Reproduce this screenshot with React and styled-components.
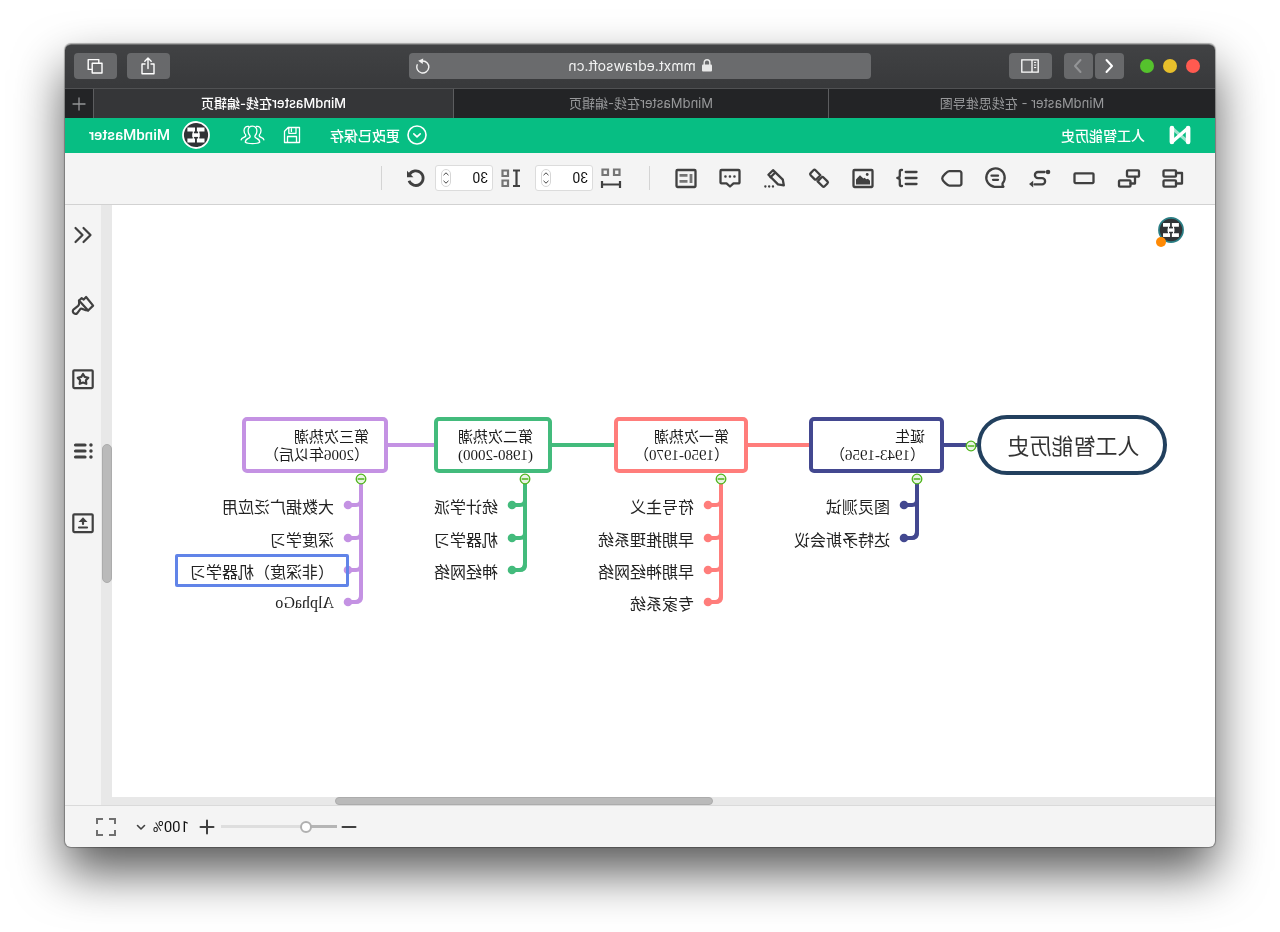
import React from 'react';
import styled, { createGlobalStyle } from 'styled-components';

const GlobalStyle = createGlobalStyle`
	* {
		box-sizing: border-box;
	}

	body {
		margin: 0;
		background: #fff;
	}

	button, input, select {
		font-family: inherit;
		margin: 0;
	}
`;

// the page is shown as seen in a mirror
const Page = styled.div`
	min-height: 100vh;
	padding: 44px 65px 85px;
	display: flex;
	overflow: hidden;
	transform: scaleX(-1);
	font-family: Inter, "Noto Sans CJK SC", sans-serif;
`;

const Window = styled.div`
	flex: 1;
	min-width: 0;
	display: flex;
	flex-direction: column;
	border-radius: 6px;
	background: #f4f4f4;
	box-shadow: 0 0 1px 1px rgba(0, 0, 0, 0.3), 0 25px 50px rgba(0, 0, 0, 0.66);
`;

const TitleBar = styled.div`
	height: 44px;
	padding: 0 9px 2px;
	display: grid;
	grid-template-columns: 1fr 462px 1fr;
	column-gap: 6px;
	align-items: center;
	border-radius: 6px 6px 0 0;
	border-top: 1px solid #6c6d6e;
	background: linear-gradient(#414244, #38393b);
`;

const BarGroup = styled.div`
	display: flex;
	align-items: center;
	gap: ${({ $gap }) => $gap}px;
	padding-left: ${({ $before }) => $before || 0}px;
	justify-content: ${({ $end }) => ($end ? 'flex-end' : 'flex-start')};
`;

const Light = styled.button`
	width: 14px;
	height: 14px;
	padding: 0;
	border: 0;
	border-radius: 50%;
	background: ${({ $color }) => $color};
`;

const ChromeButton = styled.button`
	width: ${({ $narrow }) => ($narrow ? 29 : 43)}px;
	height: 26px;
	padding: 0;
	border: 0;
	border-radius: 4px;
	background: #68696b;
	color: ${({ $dim }) => ($dim ? '#949597' : '#fff')};
	display: flex;
	align-items: center;
	justify-content: center;
`;

const AddressBar = styled.div`
	height: 26px;
	padding: 0 2px 0 26px;
	border-radius: 4px;
	background: #6a6b6d;
	color: #f2f2f2;
	display: flex;
	align-items: center;
	font-size: 14px;
`;

const Address = styled.div`
	flex: 1;
	display: flex;
	align-items: center;
	justify-content: center;
	gap: 6px;
`;

const Tabs = styled.div`
	height: 30px;
	display: flex;
	border-top: 1px solid #505153;
	background: #232426;
`;

const Tab = styled.button`
	flex: ${({ $share }) => $share} 1 0;
	padding: 0 0 2px;
	border: 0;
	border-right: 1px solid #5c5d5f;
	background: ${({ $active }) => ($active ? '#353638' : 'transparent')};
	color: ${({ $active }) => ($active ? '#fff' : '#97989a')};
	font-size: 13px;
	font-weight: ${({ $active }) => ($active ? 500 : 400)};
`;

const NewTab = styled.button`
	width: 28px;
	padding: 0;
	border: 0;
	background: transparent;
	color: #949597;
	display: flex;
	align-items: center;
	justify-content: center;
`;

const AppBar = styled.header`
	height: 35px;
	padding: 0 24px 2px;
	background: #07be83;
	color: #fff;
	display: flex;
	align-items: center;
	font-size: 14px;
`;

const DocTitle = styled.h1`
	margin: 0 auto 0 24px;
	font-size: 14px;
	font-weight: 500;
`;

const AppBarButton = styled.button`
	padding: 0;
	margin-right: ${({ $after }) => $after || 0}px;
	border: 0;
	background: none;
	color: inherit;
	display: flex;
	align-items: center;
	gap: ${({ $gap }) => $gap || 7}px;
	font-size: 14px;
	font-weight: 500;
`;

const UserName = styled.span`
	font: 500 15px Roboto, sans-serif;
`;

const Toolbar = styled.div`
	height: 52px;
	padding: 0 20px 2px;
	border-bottom: 1px solid #d2d2d2;
	background: #f4f4f4;
	color: #404040;
	display: flex;
	align-items: center;
`;

const Tools = styled.div`
	flex: 0 1 531px;
	display: grid;
	grid-template-columns: repeat(12, 1fr);
	justify-items: center;
`;

const IconButton = styled.button`
	width: 24px;
	height: 24px;
	padding: 0;
	border: 0;
	background: none;
	color: inherit;
	display: flex;
	align-items: center;
	justify-content: center;
`;

const Divider = styled.div`
	width: 1px;
	height: 24px;
	margin: 0 ${({ $after }) => $after || 0}px 0 ${({ $before }) => $before}px;
	background: #d4d4d4;
`;

const SpacingLabel = styled.label`
	display: flex;
	align-items: center;
	gap: 6px;
	margin-right: ${({ $after }) => $after}px;
`;

const NumberBox = styled.span`
	width: 58px;
	height: 26px;
	padding: 0 5px 0 4px;
	border: 1px solid #dcdcdc;
	border-radius: 3px;
	background: #fff;
	display: flex;
	align-items: center;
	justify-content: space-between;
`;

const NumberInput = styled.input`
	width: 24px;
	padding: 0;
	border: 0;
	outline: none;
	background: none;
	color: #111;
	font: 14px Roboto, sans-serif;
`;

const Stepper = styled.span`
	height: 18px;
	width: 10px;
	border: 1px solid #d6d6d6;
	border-radius: 5px;
	display: flex;
	flex-direction: column;
`;

const Step = styled.button`
	flex: 1;
	padding: 0;
	border: 0;
	background: none;
	display: flex;
	align-items: center;
	justify-content: center;
`;

const Main = styled.div`
	flex: 1;
	min-height: 420px;
	display: flex;
`;

const Viewport = styled.div`
	flex: 1;
	min-width: 0;
	display: grid;
	grid-template: 1fr 8px / 1fr 11px;
	background: #e8e8e8;
`;

const Canvas = styled.main`
	position: relative;
	overflow: hidden;
	background: #fff;
`;

const ScrollTrack = styled.div`
	display: flex;
	flex-direction: ${({ $vertical }) => ($vertical ? 'column' : 'row')};
`;

const ScrollThumb = styled.div`
	margin: ${({ $vertical }) => ($vertical ? '239px 1px 0 0' : '0 0 0 502px')};
	width: ${({ $vertical }) => ($vertical ? '10px' : '378px')};
	height: ${({ $vertical }) => ($vertical ? '139px' : '8px')};
	border: 1px solid #acacac;
	border-radius: 5px;
	background: #bababa;
`;

const Sidebar = styled.aside`
	width: 36px;
	padding-top: 18px;
	color: #404040;
	display: flex;
	flex-direction: column;
	align-items: center;
	gap: 48px;
`;

const StatusBar = styled.footer`
	height: 42px;
	padding: 0 33px;
	border-top: 1px solid #dadada;
	border-radius: 0 0 6px 6px;
	color: #404040;
	display: flex;
	align-items: center;
	justify-content: flex-end;
`;

const ZoomButton = styled.button`
	width: 16px;
	height: 16px;
	padding: 0;
	border: 0;
	background: none;
	color: #404040;
	display: flex;
	align-items: center;
	justify-content: center;
`;

const ZoomSlider = styled.input`
	appearance: none;
	width: 116px;
	height: 12px;
	margin: 0 6px 0 4px;
	background: linear-gradient(90deg, #b5b5b5 30px, #dedede 30px) center / 100% 3px no-repeat;

	&::-webkit-slider-thumb {
		appearance: none;
		width: 12px;
		height: 12px;
		border: 2px solid #b0b0b0;
		border-radius: 50%;
		background: #fff;
	}
`;

const ZoomValue = styled.label`
	margin: 0 22px 0 10px;
	display: flex;
	align-items: center;
	gap: 6px;
`;

const ZoomSelect = styled.select`
	appearance: none;
	padding: 0;
	border: 0;
	background: none;
	color: #111;
	font: 15px Roboto, sans-serif;
`;

const UserBadge = styled.div`
	position: absolute;
	left: 31px;
	top: 12px;
	width: 26px;
	height: 26px;
`;

const UserDot = styled.span`
	position: absolute;
	right: -2px;
	bottom: -4px;
	width: 10px;
	height: 10px;
	border-radius: 50%;
	background: #ff8a05;
`;

const Lines = styled.svg`
	position: absolute;
	left: 0;
	top: 0;
`;

const Root = styled.div`
	position: absolute;
	left: 48px;
	top: 210px;
	width: 190px;
	height: 60px;
	padding: 0 3px 2px 0;
	border: 4px solid #22405e;
	border-radius: 30px;
	background: #fff;
	color: #333;
	display: flex;
	align-items: center;
	justify-content: center;
	font: 22px "Liberation Serif", "Noto Sans CJK SC", serif;
`;

const Stage = styled.div`
	position: absolute;
	left: ${({ $x }) => $x}px;
	top: 212px;
	width: ${({ $w }) => $w}px;
	height: 56px;
	padding: 7px 0 0 15px;
	border: 4px solid ${({ $color }) => $color};
	border-radius: 5px;
	background: #fff;
	color: #1c1c1c;
	white-space: nowrap;
	font: 15px/18px "Liberation Serif", "Noto Sans CJK SC", serif;
`;

const Leaf = styled.div`
	position: absolute;
	left: ${({ $x }) => $x}px;
	top: ${({ $y }) => $y}px;
	height: 33px;
	padding: 0 12px;
	border: 3px solid ${({ $selected }) => ($selected ? '#6184e8' : 'transparent')};
	border-radius: 2px;
	color: #222;
	white-space: nowrap;
	display: flex;
	align-items: center;
	font: 16px "Liberation Serif", "Noto Sans CJK SC", serif;
`;

const stages = [
	{
		x: 271, w: 135, color: '#434890', title: '诞生', years: '（1943-1956）', from: 238,
		leaves: ['图灵测试', '达特矛斯会议'],
	},
	{
		x: 467, w: 134, color: '#ff7d7b', title: '第一次热潮', years: '（1950-1970）', from: 406,
		leaves: ['符号主义', '早期推理系统', '早期神经网络', '专家系统'],
	},
	{
		x: 663, w: 118, color: '#43bb7c', title: '第二次热潮', years: '(1980-2000)', from: 601,
		leaves: ['统计学派', '机器学习', '神经网络'],
	},
	{
		x: 827, w: 146, color: '#c492e3', title: '第三次热潮', years: '（2006年以后）', from: 781,
		leaves: ['大数据广泛应用', '深度学习', '（非深度）机器学习', 'AlphaGo'],
	},
];

const SELECTED = '（非深度）机器学习';
const leafY = [300, 333, 365, 397];

const Icon = ({ size = 24, stroke = 2, children }) => (
	<svg width={size} height={size} viewBox={`0 0 ${size} ${size}`} fill="none" stroke="currentColor"
		strokeWidth={stroke} strokeLinecap="round" strokeLinejoin="round" aria-hidden="true">
		{children}
	</svg>
);

const Fold = ({ x, y }) => (
	<g stroke="#4fb51c" strokeWidth="1.3">
		<circle cx={x} cy={y} r="4.8" fill="#e9f3e4" />
		<path d={`M${x - 2.8} ${y}h5.6`} strokeWidth="1.5" />
	</g>
);

const Avatar = ({ size, ring }) => (
	<svg width={size} height={size} viewBox="0 0 28 28" aria-hidden="true">
		<circle cx="14" cy="14" r="13" fill="#303336" stroke={ring} strokeWidth="1.8" />
		<g fill="#fff">
			<rect x="5.5" y="6.5" width="7.6" height="4" />
			<rect x="15" y="6.5" width="7.6" height="4" />
			<rect x="5.5" y="17.5" width="7.6" height="4" />
			<rect x="15" y="17.5" width="7.6" height="4" />
			<rect x="10.3" y="12.3" width="7.4" height="3.6" />
		</g>
		<path d="M11.3 10v8M16.7 10v8" stroke="#fff" strokeWidth="1.2" />
	</svg>
);

const tools = [
	['主题', <><rect x="9" y="4.3" width="12.5" height="6.4" rx="1" /><rect x="9" y="14.3" width="12.5" height="6.4" rx="1" /><path d="M9 7H3v10.5h6" /></>],
	['子主题', <><rect x="2" y="4.3" width="12" height="6.4" rx="1" /><rect x="10.5" y="14.3" width="11.5" height="6.4" rx="1" /><path d="M6 11v6.5h4.5" /></>],
	['浮动主题', <rect x="2.5" y="7.3" width="19" height="9.8" rx="1" />],
	['关系线', <><path d="M7.5 6H14a3.1 3.1 0 0 1 0 6.2h-4a3.1 3.1 0 0 0 0 6.2h7.5" /><circle cx="4" cy="6" r="2.3" fill="currentColor" stroke="none" /><path d="M18.8 14.8l4.2 3.2-4.2 3.4z" fill="currentColor" stroke="none" /></>],
	['标注', <><path d="M13.5 20.8H4.6c.9-1 1.1-1.9.9-3.2A9.2 9.2 0 1 1 13.5 20.8z" /><path d="M10 9.7h6.5M10 13.8h5" /></>],
	['外框', <path d="M4.5 5.2h10.2c1.8 0 7.1 4.8 7.1 7.2s-5.3 7.2-7.1 7.2H4.5a1.9 1.9 0 0 1-1.9-1.9V7.1a1.9 1.9 0 0 1 1.9-1.9z" />],
	['概要', <><path d="M2.5 6h10.8M2.5 12h10.8M2.5 18h10.8" /><path d="M17 4h.8c1 0 1.4.6 1.4 1.6v4c0 1.4.7 2.4 2.5 2.4-1.8 0-2.5 1-2.5 2.4v4c0 1-.4 1.6-1.4 1.6H17" /></>],
	['图片', <><rect x="2.5" y="4" width="19" height="17" rx="1" /><path d="M5 18.5v-3.8l2-2 1.6.6 2-1.6 1 .8 3.4-3.3 2.2 2.4 1.8 1.8v5.1z" fill="currentColor" stroke="none" /><circle cx="7.8" cy="8.5" r="1.4" fill="currentColor" stroke="none" /></>],
	['超链接', <><path d="M10.6 9.2l4.9-4.9a1.5 1.5 0 0 1 2.1 0l2.8 2.8a1.5 1.5 0 0 1 0 2.1l-3.9 3.9a1.5 1.5 0 0 1-2.1 0l-2.6-2.6" /><path d="M13.4 15.4l-4.9 4.9a1.5 1.5 0 0 1-2.1 0l-2.8-2.8a1.5 1.5 0 0 1 0-2.1l3.9-3.9a1.5 1.5 0 0 1 2.1 0l2.6 2.6" /></>],
	['注释', <><path d="M3.2 19.3l1-5.6L14 4.2l4.6 4.6L9 18.4z" /><path d="M12 6.8l4.5 4.5" /><path d="M14 20.5h.1M17.8 20.5h.1M21.6 20.5h.1" /></>],
	['评论', <><path d="M3.5 4h17a1 1 0 0 1 1 1v11.4a1 1 0 0 1-1 1h-5L12 20.5l-3.5-3.1h-5a1 1 0 0 1-1-1V5a1 1 0 0 1 1-1z" /><path d="M7.5 10.5h.1M12 10.5h.1M16.5 10.5h.1" strokeWidth="2.5" /></>],
	['标签', <><rect x="2.5" y="4" width="19" height="17" rx="1" /><path d="M7 8v9M10.5 9.3h8M10.5 15.3h8" stroke="#757575" strokeWidth="2.8" strokeLinecap="butt" /></>],
];

const sideTools = [
	['收起', <path d="M11.5 5l-7 7 7 7M19.5 5l-7 7 7 7" />],
	['样式', <><path d="M8.9 2L1.9 10.6l5 4.9L16 5.5l-2.7-2.3-2 1.4z" /><path d="M16 5.500c0 2.400-.8 3.900.9 5.400l4.400 3.400c2.600 2.400-1 6.400-3.600 3.800l-3-4c-1.500-1.700-3.600 1.600-7.800 1.400" /></>],
	['图标', <><rect x="2.3" y="3.3" width="19.4" height="17.8" rx="1" /><path d="M12 7l1.7 2.9 3.6.8-2.4 2.6.4 3.500-3.300-1.300-3.300 1.300.4-3.500-2.400-2.600 3.600-.8z" /></>],
	['大纲', <><path d="M10 6h9.500M10 12h9.500M10 18h9.500" strokeWidth="3.200" /><path d="M4 6h.1M4 12h.1M4 18h.1" strokeWidth="3.400" /></>],
	['导出', <><rect x="2.3" y="3.3" width="19.4" height="17.8" rx="1" /><path d="M8 16.500h8M12 13V9" /><path d="M7.500 11L12 6.300l4.500 4.700z" fill="currentColor" stroke="none" /></>],
];

const NumberField = ({ label, icon, after }) => (
	<SpacingLabel $after={after}>
		<Icon stroke={2.2}>{icon}</Icon>
		<NumberBox>
			<NumberInput type="text" defaultValue="30" aria-label={label} />
			<Stepper>
				<Step aria-label="增加"><svg width="6" height="4" fill="none" stroke="#444"><path d="M.5 3.2L3 .8l2.5 2.4" /></svg></Step>
				<Step aria-label="减少"><svg width="6" height="4" fill="none" stroke="#444"><path d="M.5.8L3 3.2 5.5.8" /></svg></Step>
			</Stepper>
		</NumberBox>
	</SpacingLabel>
);

const Browser = () => (
	<>
		<TitleBar>
			<BarGroup $gap={12} $before={6}>
				<BarGroup $gap={16}>
					<BarGroup $gap={9}>
						<Light $color="#ff5a50" aria-label="关闭" />
						<Light $color="#e7bf2b" aria-label="最小化" />
						<Light $color="#55c22d" aria-label="全屏" />
					</BarGroup>
					<BarGroup $gap={2}>
						<ChromeButton $narrow aria-label="后退">
							<Icon size={16}><path d="M10.500 2L5 8l5.500 6" /></Icon>
						</ChromeButton>
						<ChromeButton $narrow $dim aria-label="前进">
							<Icon size={16}><path d="M5.500 2L11 8l-5.500 6" /></Icon>
						</ChromeButton>
					</BarGroup>
				</BarGroup>
				<ChromeButton aria-label="边栏">
					<Icon size={18} stroke={1.3}>
						<path d="M.8 2.8h16.4v12.4H.8zM7 2.8v12.4" strokeLinejoin="miter" />
						<path d="M2.8 5.4h2.2M2.8 8h2.2M2.8 10.6h2.2" strokeWidth="1" strokeLinecap="butt" />
					</Icon>
				</ChromeButton>
			</BarGroup>
			<AddressBar>
				<Address>
					<svg width="10" height="13" viewBox="0 0 10 13" fill="none" stroke="#e8e8e8" aria-hidden="true">
						<rect y="5.5" width="10" height="7" rx="1" fill="#e8e8e8" stroke="none" />
						<path d="M2.2 6V3.6a2.8 2.8 0 0 1 5.6 0V6" strokeWidth="1.4" />
					</svg>
					mmxt.edrawsoft.cn
				</Address>
				<IconButton aria-label="重新载入">
					<Icon size={16} stroke={1.4}>
						<path d="M13.800 6.800A6 6 0 1 1 8.300 3" />
						<path d="M7.800.4l5 2.400-4.500 3.200z" fill="currentColor" stroke="none" />
					</Icon>
				</IconButton>
			</AddressBar>
			<BarGroup $gap={10} $end>
				<ChromeButton aria-label="共享">
					<Icon size={18} stroke={1.4}>
						<path d="M6 7H3v9.7h12V7h-3M9 11.5V1.2M5.800 4.200L9 1l3.200 3.200" />
					</Icon>
				</ChromeButton>
				<ChromeButton aria-label="标签页概览">
					<Icon size={18} stroke={1.4}>
						<path d="M2 6.200h9.800V16H2zM5.200 6V2.600h10.600v9.800h-3.600" />
					</Icon>
				</ChromeButton>
			</BarGroup>
		</TitleBar>
		<Tabs>
			<Tab $share={387}>MindMaster - 在线思维导图</Tab>
			<Tab $share={375}>MindMaster在线-编辑页</Tab>
			<Tab $share={360} $active>MindMaster在线-编辑页</Tab>
			<NewTab aria-label="新标签页">
				<Icon size={14} stroke={1.3}><path d="M7 1v12M1 7h12" /></Icon>
			</NewTab>
		</Tabs>
	</>
);

const MindMap = () => (
	<>
		<Lines width="1103" height="592" fill="none" strokeWidth="4" strokeLinecap="round">
			{stages.map(({ x, from, color, leaves }) => {
				const spine = x + 27;
				const last = leafY[leaves.length - 1];
				return (
					<g key={x} stroke={color}>
						<path d={`M${from} 240H${x}`} strokeLinecap="butt" />
						<path d={`M${spine} 277V${last - 7}q0 7 6 7h7`} />
						{leaves.map((leaf, i) => (
							<React.Fragment key={leaf}>
								<path d={`M${spine} ${leafY[i] - 5}q0 5 5 5h8`} />
								<circle cx={x + 40} cy={leafY[i]} r="4.3" fill={color} stroke="none" />
							</React.Fragment>
						))}
					</g>
				);
			})}
		</Lines>
		<Root>人工智能历史</Root>
		{stages.map(({ x, w, color, title, years, leaves }) => (
			<React.Fragment key={x}>
				<Stage $x={x} $w={w} $color={color}>
					{title}<br />{years}
				</Stage>
				{leaves.map((leaf, i) => (
					<Leaf key={leaf} $x={x + 39} $y={leafY[i] - 16} $selected={leaf === SELECTED}>{leaf}</Leaf>
				))}
			</React.Fragment>
		))}
		<Lines width="1103" height="592" fill="none" strokeLinecap="round">
			<Fold x={244} y={241} />
			{stages.map(({ x }) => <Fold key={x} x={x + 27} y={274} />)}
		</Lines>
	</>
);

const App = () => {
	return (
		<Page>
			<GlobalStyle />
			<Window>
				<Browser />
				<AppBar>
					<svg width="22" height="20" viewBox="0 0 22 20" fill="none" stroke="#fff" strokeLinejoin="round" strokeLinecap="round" aria-hidden="true">
						<path d="M18.5 3.500L3.500 16.500" strokeWidth="3" opacity="0.6" />
						<path d="M3.500 3.500l15 13" strokeWidth="3.400" />
						<path d="M2.900 3v14M19.100 3v14" strokeWidth="4.600" />
					</svg>
					<DocTitle>人工智能历史</DocTitle>
					<AppBarButton $after={29}>
						<Icon size={20} stroke={1.6}><circle cx="10" cy="10" r="9" /><path d="M6.8 8.8L10 11.8l3.2-3" /></Icon>
						更改已保存
					</AppBarButton>
					<AppBarButton $after={18} aria-label="保存">
						<Icon size={18} stroke={1.3}>
							<path d="M1.500 1.500h11.300l3.700 3.800v11.200h-15zM5 1.500v5.800h7.200V1.500M9.600 3v2.400M4.500 16.500V10.500h9v6" />
						</Icon>
					</AppBarButton>
					<AppBarButton $after={30} aria-label="协作">
						<svg width="25" height="20" viewBox="0 0 25 20" fill="none" stroke="#fff" strokeWidth="1.3" strokeLinecap="round" strokeLinejoin="round" aria-hidden="true">
							<path d="M12.500 1.200c2.800 0 4.400 2 4.400 4.800 0 2-.8 3.600-1.900 4.700-.5 1.300.2 2.100 1.700 2.700 2 .9 3 1.800 3 3.800-2.600 1.800-11.800 1.800-14.400 0 0-2 1-2.900 3-3.800 1.500-.6 2.200-1.400 1.700-2.700C8.900 9.600 8.100 8 8.100 6c0-2.800 1.600-4.800 4.400-4.800z" />
							<path d="M8.600 1.500C6 1 4 2.600 4 5.600c0 2 .7 3.300 1.700 4.300.4 1.400-.6 2-1.900 2.500-1.500.6-2.500 1.300-2.700 2.500M16.400 1.500C19 1 21 2.600 21 5.600c0 2-.7 3.300-1.700 4.300-.4 1.400.6 2 1.900 2.500 1.500.6 2.500 1.300 2.700 2.500" />
						</svg>
					</AppBarButton>
					<AppBarButton $gap={12}>
						<Avatar size={28} ring="#fff" />
						<UserName>MindMaster</UserName>
					</AppBarButton>
				</AppBar>
				<Toolbar>
					<Tools>
						{tools.map(([name, icon]) => (
							<IconButton key={name} aria-label={name}><Icon stroke={2.3}>{icon}</Icon></IconButton>
						))}
					</Tools>
					<Divider $before={14} $after={26} />
					<NumberField label="水平间距" after={12} icon={<>
						<path d="M3.500 3.500h5.500v5.500h-5.500zM15 3.500h5.500v5.500h-5.500z" stroke="#757575" strokeLinejoin="miter" />
						<path d="M3 15v7M21 15v7M3 18.500h18" strokeLinecap="butt" />
					</>} />
					<NumberField label="垂直间距" after={7} icon={<>
						<path d="M15 4.500h5.500v5.500h-5.500zM15 14.500h5.500v5.500h-5.500z" stroke="#757575" strokeLinejoin="miter" />
						<path d="M3 4.500h7M3 20h7M6.500 4.500v15.500" strokeLinecap="butt" />
					</>} />
					<IconButton aria-label="重置">
						<Icon stroke={2.8}>
							<path d="M18.500 8.500A7.300 7.300 0 1 0 19 14.800" strokeLinecap="butt" />
							<path d="M21 4.800v6.400h-6.400z" fill="currentColor" stroke="none" />
						</Icon>
					</IconButton>
					<Divider $before={22} />
				</Toolbar>
				<Main>
					<Viewport>
						<Canvas>
							<UserBadge>
								<Avatar size={26} ring="#2b7f86" />
								<UserDot />
							</UserBadge>
							<MindMap />
						</Canvas>
						<ScrollTrack $vertical><ScrollThumb $vertical /></ScrollTrack>
						<ScrollTrack><ScrollThumb /></ScrollTrack>
					</Viewport>
					<Sidebar>
						{sideTools.map(([name, icon]) => (
							<IconButton key={name} aria-label={name}><Icon stroke={2.2}>{icon}</Icon></IconButton>
						))}
					</Sidebar>
				</Main>
				<StatusBar>
					<ZoomButton aria-label="缩小"><Icon size={16}><path d="M1.500 8h13" /></Icon></ZoomButton>
					<ZoomSlider type="range" min="0" max="100" defaultValue="24" aria-label="缩放" />
					<ZoomButton aria-label="放大"><Icon size={16}><path d="M1.500 8h13M8 1.500v13" /></Icon></ZoomButton>
					<ZoomValue>
						<ZoomSelect aria-label="缩放比例" defaultValue="100%">
							<option>100%</option>
						</ZoomSelect>
						<Icon size={10} stroke={1.6}><path d="M1.500 3.500L5 7l3.500-3.500" /></Icon>
					</ZoomValue>
					<ZoomButton aria-label="全屏显示">
						<svg width="20" height="20" viewBox="0 0 20 20" fill="none" stroke="#707070" strokeWidth="2" overflow="visible" aria-hidden="true">
							<path d="M1 7V2h6M13 2h6v5M19 13v5h-6M7 18H1v-5" />
						</svg>
					</ZoomButton>
				</StatusBar>
			</Window>
		</Page>
	);
};

export default App;
